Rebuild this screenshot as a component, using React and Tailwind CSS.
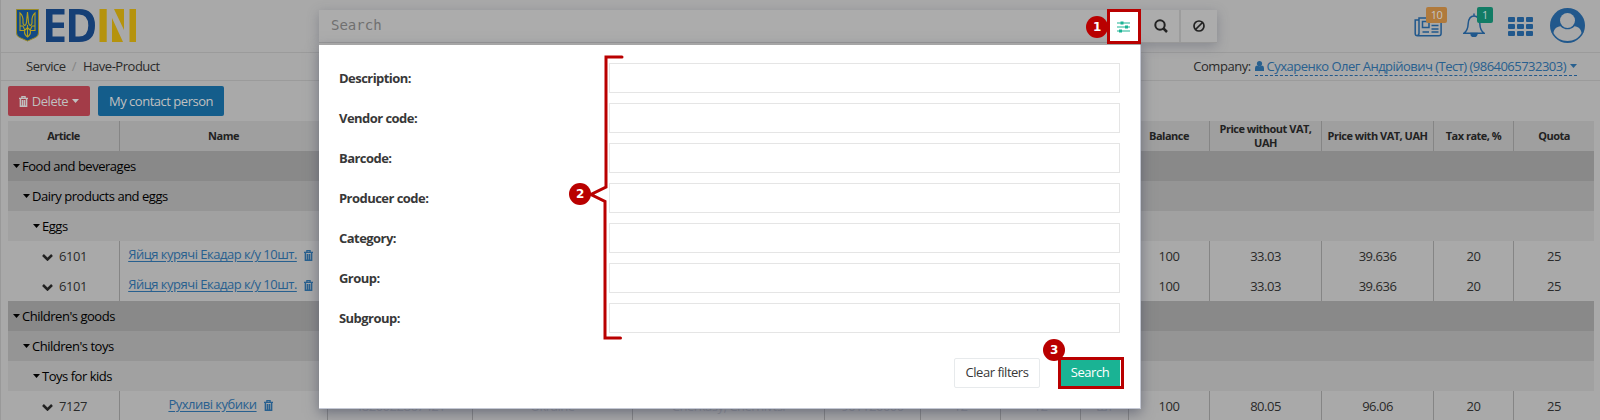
import React from 'react';

const COLS = 'grid grid-cols-[112px_208px_145px_160px_192px_96px_80px_80px_48px_81px_112px_112px_80px_80px]';

const HEADERS = ['Article', 'Name', 'Barcode', 'Country', 'Region', 'Code', 'Min', 'Pack', 'Unit', 'Balance', 'Price without VAT, UAH', 'Price with VAT, UAH', 'Tax rate, %', 'Quota'];

const EGG = ['6101', 'Яйця курячі Екадар к/у 10шт.', '', '', '', '', '', '', '', '100', '33.03', '39.636', '20', '25'];

const ROWS = [
  { level: 0, title: 'Food and beverages' },
  { level: 1, title: 'Dairy products and eggs' },
  { level: 2, title: 'Eggs' },
  { cells: EGG },
  { cells: EGG },
  { level: 0, title: "Children's goods" },
  { level: 1, title: "Children's toys" },
  { level: 2, title: 'Toys for kids' },
  { cells: ['7127', 'Рухливі кубики', '4820022867421', 'Ukraine', 'Cherkasy, Chernivtsi', '901120000', '12', '12', 'шт', '100', '80.05', '96.06', '20', '25'] },
];

const LEVELS = ['bg-[#898989] pl-[5px]', 'bg-[#959595] pl-[15px]', 'bg-[#a1a1a1] pl-[25px]'];

const FIELDS = ['Description:', 'Vendor code:', 'Barcode:', 'Producer code:', 'Category:', 'Group:', 'Subgroup:'];

function Caret({ className = '' }) {
  return (
    <svg className={`h-1 w-[7px] shrink-0 ${className}`} viewBox="0 0 8 4" preserveAspectRatio="none" fill="currentColor">
      <path d="M0 0h8L4 4z" />
    </svg>
  );
}

function Trash({ className = '' }) {
  return (
    <svg className={`h-[11px] w-[9px] shrink-0 ${className}`} viewBox="0 0 9 11" fill="none" stroke="currentColor">
      <path d="M0 2.3h9M2.9 2V.6h3.2V2" strokeWidth="1.3" />
      <path d="M1.4 2.5v7.800h6.200V2.500M3.500 4v5.500M5.500 4v5.500" strokeWidth="1.500" />
    </svg>
  );
}

function Logo() {
  return (
    <svg className="h-[34px] w-[122px]" viewBox="15 8 122 34">
      <path d="M16.5 9.5h22V33q0 3.4-3.5 4.7L27.5 41 20 37.700q-3.500-1.300-3.500-4.700z" fill="#124a84" stroke="#9a8b24" />
      <path d="M20 13v17.500h4.700q-.8 4 2.800 6.500 3.600-2.500 2.800-6.500H35V13q-3.500 3-3 8.500.3 3-1.700 4-2-1-2-5.500l-.8-8-.8 8q0 4.500-2 5.500-2-1-1.700-4Q23.500 16 20 13zM20 26h3l2 4.500M35 26h-3l-2 4.500M27.500 25v12M24.500 30.500l3-3 3 3" fill="none" stroke="#b5a01d" strokeWidth="1.100" />
      <path d="M46 9h18.500v5.500h-12v8H64V28H52.500v8.500h12V42H46z" fill="#153f76" />
      <path fillRule="evenodd" d="M69 9h10q16 0 16 16.500T79 42H69zm6.500 5.500v22H79q9.300 0 9.300-11T79 14.500z" fill="#153f76" />
      <path d="M99.500 9h7.200v33h-7.200zM129.500 9h6.500v33h-6.500zM114 9h10v21zM112 18l11 24h-11z" fill="#b5930e" />
    </svg>
  );
}

function NavIcons() {
  return (
    <div className="flex items-start text-[#21588c]">
      <div className="relative mt-[17px] h-5 w-7">
        <svg className="h-5 w-7" viewBox="0 0 28 20" fill="none" stroke="currentColor" strokeWidth="1.500">
          <path d="M5 3H1.200v13.500q0 2.300 2.300 2.300h21.300q2.300 0 2.300-2.300V1H5v15q0 2.500-1.800 2.500" />
          <path d="M8.500 4.500h6.500v6H8.500zM17.500 5h7M17.500 8.500h7M17.500 12h7M8.500 15h6.500M17.500 15h7" />
        </svg>
        <span className="absolute left-3 -top-[10px] h-4 w-[21px] rounded-xs bg-[#b07a3c] text-center text-[11px] leading-4 text-[#c4c4c4]">10</span>
      </div>
      <div className="relative ml-[21px] mt-[13px] h-6 w-[22px]">
        <svg className="h-6 w-[22px]" viewBox="0 0 22 24" fill="none" stroke="currentColor" strokeWidth="1.500">
          <path d="M11 3C6.500 3 5.500 7 5.200 10.500 5 15 3.500 18.500 1 20.200h20c-2.500-1.700-4-5.200-4.200-9.700C16.500 7 15.500 3 11 3zM11 .5V3" />
          <path d="M8 20.500a3 3 0 0 0 6 0z" fill="currentColor" />
        </svg>
        <span className="absolute left-[14px] -top-[6px] h-4 w-4 rounded-xs bg-[#127c65] text-center text-[11px] leading-4 text-[#b9c9c5]">1</span>
      </div>
      <div className="ml-[23px] mt-[17px] grid grid-cols-3 gap-x-[2px] gap-y-[2px]">
        {Array.from({ length: 9 }, (_, i) => <i key={i} className="h-[5px] w-[7px] rounded-[1px] bg-[#21588c]" />)}
      </div>
      <svg className="ml-[17px] mt-2 h-[35px] w-[35px]" viewBox="0 0 35 35">
        <circle cx="17.500" cy="17.500" r="17.500" fill="currentColor" />
        <circle cx="17.500" cy="12.500" r="7.500" fill="#a9a9a9" />
        <path d="M3.500 25c.5-4 3-6.500 7-6.800 4 4.200 10 4.200 14 0 4 .3 6.500 2.800 7 6.800-2.500 5-8 8-14 8s-11.500-3-14-8z" fill="#a9a9a9" />
      </svg>
    </div>
  );
}

function Badge({ children, className }) {
  return <span className={`absolute flex h-[22px] w-[22px] items-center justify-center rounded-full bg-[#b90000] font-['DejaVu_Sans'] text-[12px] font-bold text-white ${className}`}>{children}</span>;
}

function DataRow({ cells }) {
  return (
    <div className={`${COLS} h-[30px]`}>
      {cells.map((cell, i) => (
        <div key={i} className={`flex items-center justify-center border-[#858585] ${i < 13 ? 'border-r' : ''} ${i > 1 && i < 9 ? 'text-[#909197]' : ''}`}>
          {i === 0 && (
            <svg className="ml-[2px] mr-[6px] mt-[3px] h-[7px] w-[11px]" viewBox="0 0 11 7" fill="none" stroke="#222" strokeWidth="2.500"><path d="M1 1l4.500 4.500L10 1" /></svg>
          )}
          {i === 1 ? (
            <div className="flex items-center whitespace-nowrap pb-1 pr-[6px] tracking-[-0.5px] text-[#28608f]">
              <span className="underline underline-offset-2">{cell}</span>
              <Trash className="ml-[7px] mt-[3px]" />
            </div>
          ) : cell}
        </div>
      ))}
    </div>
  );
}

export default function App() {
  return (
    <div className="relative h-[420px] w-[1600px] overflow-hidden border-l border-[#999] bg-[#a9a9a9] font-['Open_Sans',sans-serif] text-[13px] leading-[18px] tracking-[-0.48px] text-[#2a2a2a]">
      <header className="flex h-[53px] justify-between border-b border-[#9b9b9b] pl-[14px] pr-[15px]">
        <div className="pt-2"><Logo /></div>
        <NavIcons />
      </header>
      <div className="flex h-7 items-center justify-between border-b border-[#9b9b9b] pb-px pl-[25px] pr-[23px]">
        <div className="flex"><span>Service</span><span className="ml-[6px] mr-[5px] text-[#858585]">/</span><span className="ml-[2px]">Have-Product</span></div>
        <div className="flex">
          <span className="mr-1">Company:</span>
          <span className="flex items-center border-b border-dashed border-[#21588c] tracking-[-0.52px] text-[#28608f]">
            <svg className="mr-[3px] h-[10px] w-[9px]" viewBox="0 0 9 10" fill="currentColor"><circle cx="4.500" cy="2.600" r="2.600" /><path d="M0 10V7q0-2.500 2-2.500 2.500 1.500 5 0 2 0 2 2.500v3z" /></svg>
            Сухаренко Олег Андрійович (Тест) (9864065732303)
            <Caret className="ml-[4px]" />
          </span>
        </div>
      </div>
      <div className="flex gap-2 pl-[7px] pt-[5px] text-[#c0c0c0]">
        <div className="flex h-[30px] w-[82px] items-center justify-center rounded-xs bg-[#a33c48]"><Trash className="mr-1" />Delete<Caret className="ml-1" /></div>
        <div className="flex h-[30px] w-[126px] items-center justify-center rounded-xs bg-[#145d8b]">My contact person</div>
      </div>
      <div className="ml-[7px] mt-[5px] w-[1586px]">
        <div className={`${COLS} h-[30px] bg-[#9f9f9f] text-center text-[11px] font-bold leading-[14px] tracking-[-0.5px] text-[#222]`}>
          {HEADERS.map((h, i) => <div key={h} className={`flex items-center justify-center border-[#858585] px-1 ${i < 13 ? 'border-r' : ''}`}>{h}</div>)}
        </div>
        {ROWS.map((row, i) => row.cells ? <DataRow key={i} cells={row.cells} /> : (
          <div key={i} className={`flex h-[30px] items-center text-black ${LEVELS[row.level]}`}><Caret className="mr-[2px]" />{row.title}</div>
        ))}
      </div>

      <div className="absolute left-[318px] top-[10px] flex h-[33px] w-[898px] border-b border-[#989898] bg-[#acacac] shadow-[0_3px_12px_rgba(70,75,95,0.35)]">
        <div className="flex-1 pl-3 pt-[6px] font-['DejaVu_Sans_Mono'] text-[14px] tracking-normal text-[#707070]">Search</div>
        <div className="flex w-[38px] items-center justify-center border-r-2 border-[#9c9c9c]">
          <svg className="h-[14px] w-[14px]" viewBox="0 0 14 14" fill="none" stroke="#222" strokeWidth="2"><circle cx="6" cy="6" r="4.700" /><path d="M9.500 9.500L13 13" strokeWidth="2.500" /></svg>
        </div>
        <div className="flex w-9 items-center justify-center">
          <svg className="h-3 w-3" viewBox="0 0 12 12" fill="none" stroke="#222" strokeWidth="1.700"><circle cx="6" cy="6" r="5" /><path d="M9.500 2.500l-7 7" /></svg>
        </div>
      </div>
      <div className="absolute left-[318px] top-[45px] h-[364px] w-[822px] border-r border-b border-[#c4c8d4] bg-white px-5 pt-[18px] shadow-[0_4px_12px_rgba(70,75,95,0.6)]">
        <div className="flex flex-col gap-[10px]">
          {FIELDS.map((f) => (
            <label key={f} className="flex h-[30px] items-center font-bold tracking-[-0.54px] text-[#383838]">
              <span className="w-[270px]">{f}</span>
              <span className="h-[30px] flex-1 border border-[#e5e5e5]" />
            </label>
          ))}
        </div>
        <div className="mt-[25px] flex justify-end">
          <button className="h-[30px] w-[86px] rounded-xs border border-[#e7eaec] pb-[2px] text-[#383838]">Clear filters</button>
          <button className="ml-[19px] h-[30px] w-[61px] bg-[#1ab394] pb-[2px] pl-px text-white">Search</button>
        </div>
      </div>
      <div className="absolute left-[318px] top-[43px] h-[2px] w-[821px] bg-[#a6a6a6]" />

      <div className="absolute left-[1106px] top-[9px] flex h-[35px] w-[34px] items-center justify-center border-[3px] border-[#b90000] bg-white">
        <svg className="mr-px h-3 w-[13px]" viewBox="0 0 13 12" fill="#1ab394"><path d="M0 1.500h13v1H0zM0 5.500h13v1H0zM0 9.500h13v1H0zM3.500.5h3v3h-3zM8 4.500h3v3H8zM2 8.500h3v3H2z" /></svg>
      </div>
      <svg className="absolute left-[589px] top-[50px] h-[295px] w-9" viewBox="590 50 36 295" fill="none" stroke="#b90000" strokeWidth="3" strokeLinecap="round"><path d="M622 57h-16v130l-15 7.500 14 7V338h15.500" /></svg>
      <div className="absolute left-[1057px] top-[357px] h-8 w-[66px] border-[3px] border-[#b90000]" />
      <Badge className="left-[1085px] top-4">1</Badge>
      <Badge className="left-[568px] top-[183px]">2</Badge>
      <Badge className="left-[1042px] top-[339px]">3</Badge>
    </div>
  );
}
